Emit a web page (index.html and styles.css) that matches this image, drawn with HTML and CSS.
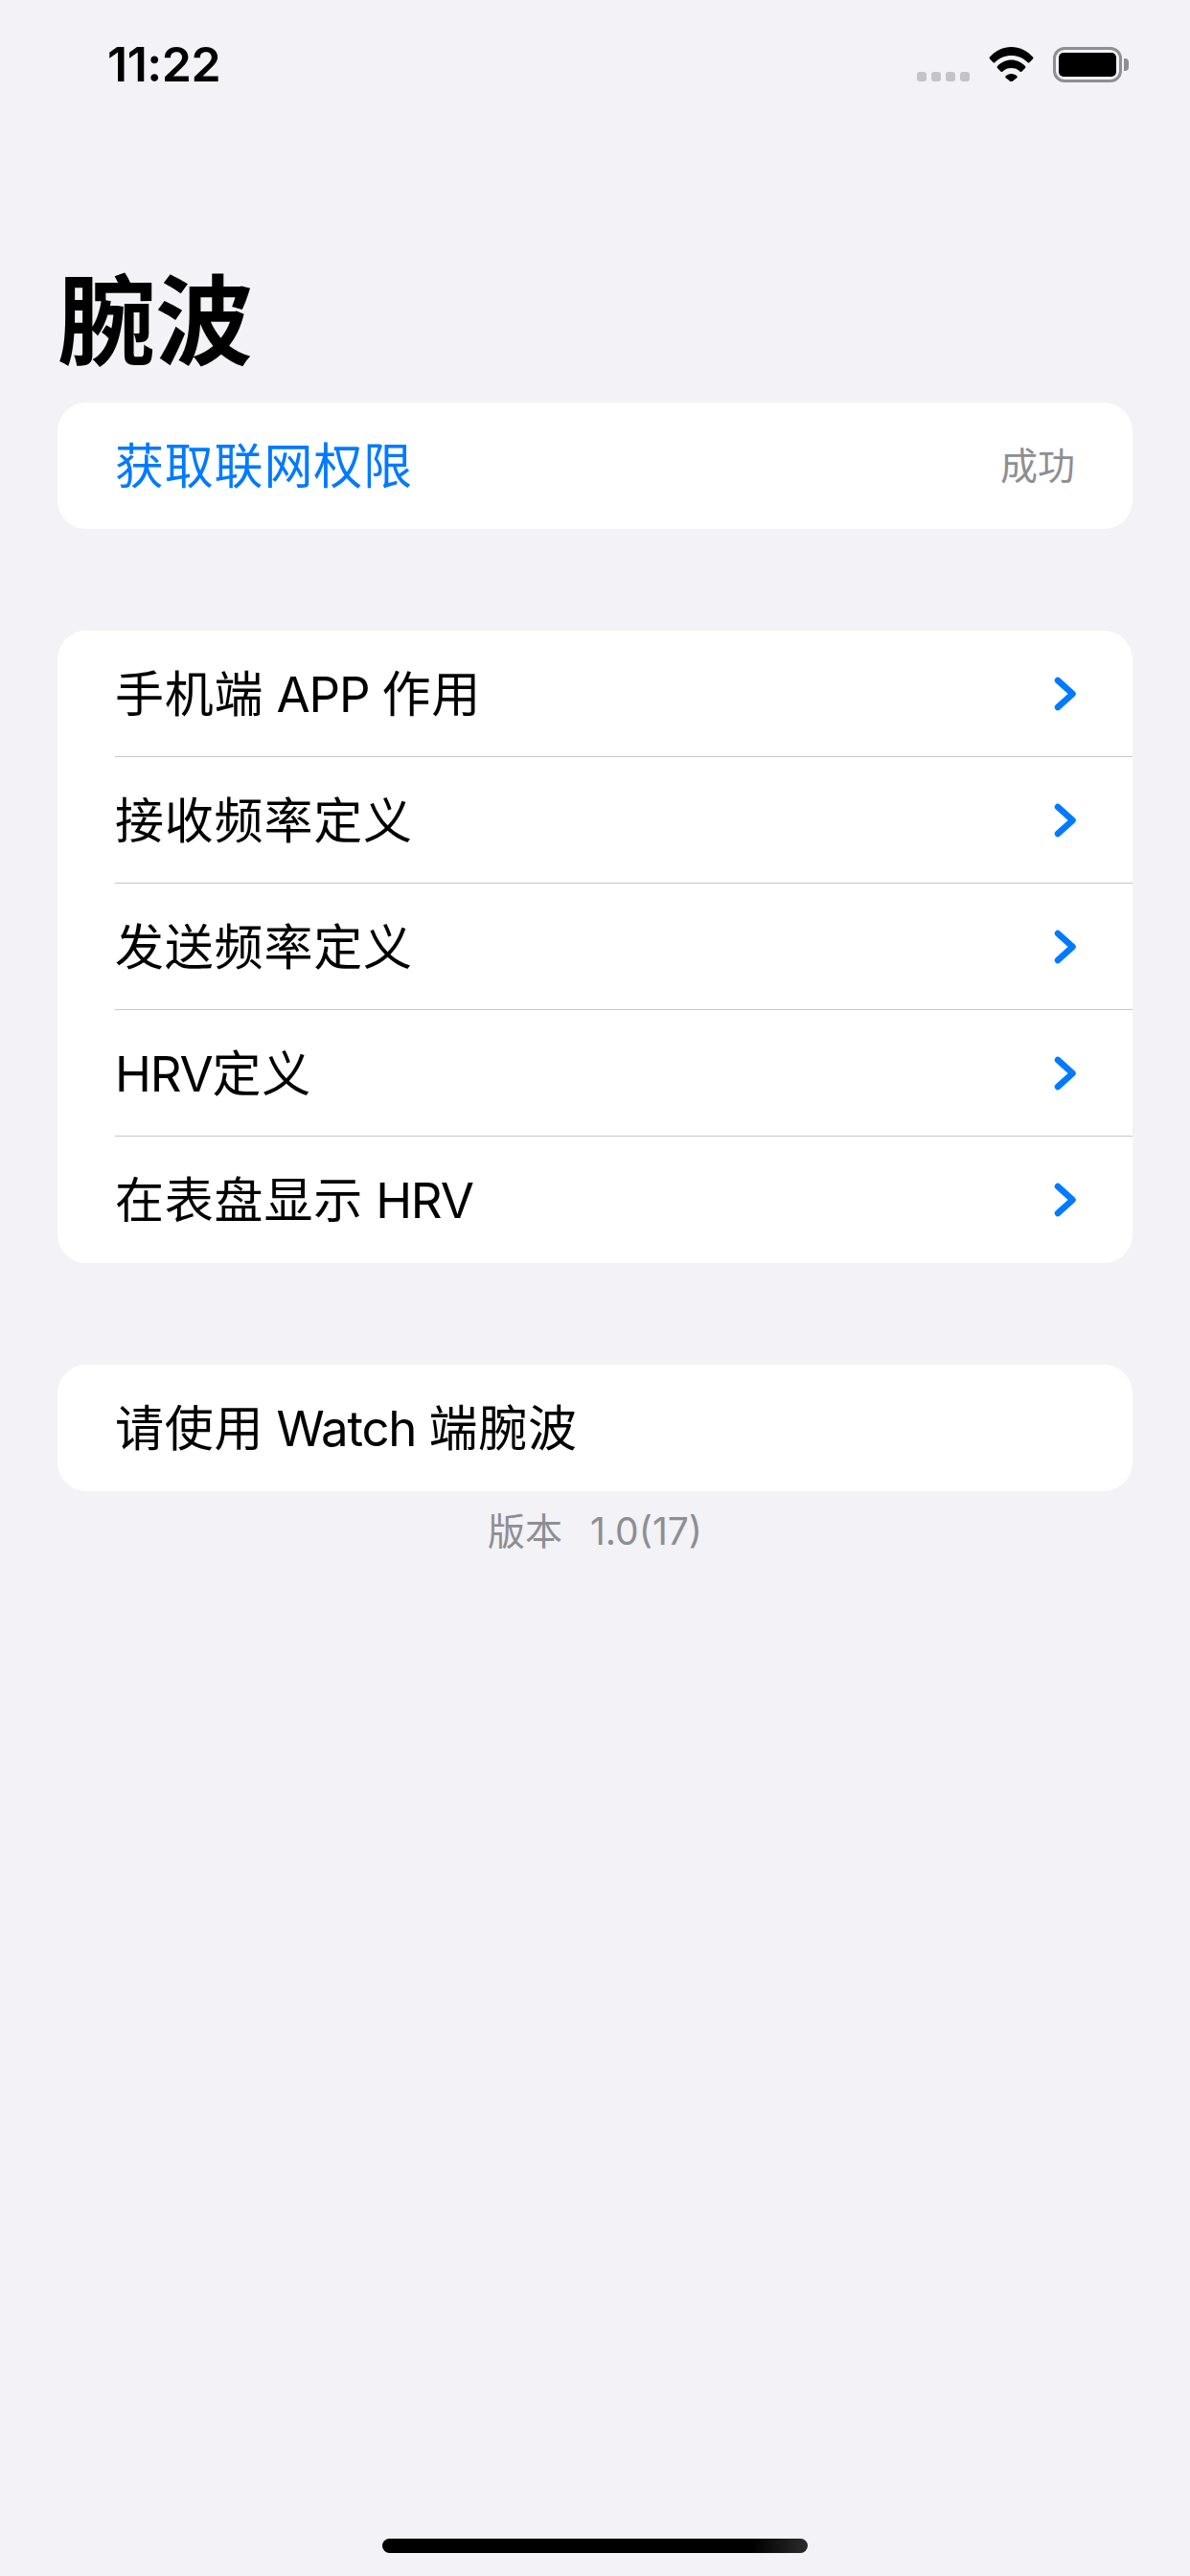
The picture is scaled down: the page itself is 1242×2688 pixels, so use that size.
FILE: index.html
```html
<!DOCTYPE html>
<html lang="zh-CN">
    <head>
        <meta charset="UTF-8">
        <meta name="viewport" content="width=device-width, initial-scale=1.0">
        <title>腕波</title>
        <link rel="stylesheet" href="styles.css">
</head>
<body>
    <div class="status-bar">
        <span class="time">11:22</span>
        <div class="status-icons">
            <div class="signal">
                <span></span><span></span><span></span><span></span>
            </div>
            <svg class="wifi" width="47" height="36" viewBox="0 0 47 36" fill="currentColor">
                <path d="M1 10.5C7 4 15 0 23.5 0C32 0 40 4 46 10.5Q47 11.5 46 12.5L42.5 16Q41.5 17 40.5 16C36 11.5 30 9 23.5 9C17 9 11 11.5 6.5 16Q5.5 17 4.5 16L1 12.5Q0 11.5 1 10.5Z"/>
                <path d="M9 20C13 16 18 13.5 23.5 13.5C29 13.5 34 16 38 20Q39 21 38 22L34.5 25.5Q33.5 26.5 32.5 25.5C30 23 27 22 23.5 22C20 22 17 23 14.5 25.5Q13.5 26.5 12.5 25.5L9 22Q8 21 9 20Z"/>
                <path d="M17.5 30.5C19 29 21 28 23.5 28C26 28 28 29 29.5 30.5Q30 31.2 29.5 32L24.5 36Q23.5 36.6 22.5 36L17.5 32Q17 31.2 17.5 30.5Z"/>
            </svg>
            <div class="battery">
                <div class="battery-body"><div class="battery-level"></div></div>
                <div class="battery-cap"></div>
            </div>
        </div>
    </div>

    <h1 class="title">腕波</h1>

    <div class="group">
        <div class="row">
            <span class="link">获取联网权限</span>
            <span class="value">成功</span>
        </div>
    </div>

    <div class="group">
        <div class="row">
            <span>手机端<span class="en"> APP </span>作用</span>
            <svg class="chevron" width="24" height="36" viewBox="0 0 24 36" fill="none" stroke="currentColor"><path d="M4 4L19.5 18L4 32"/></svg>
        </div>
        <div class="row">
            <span>接收频率定义</span>
            <svg class="chevron" width="24" height="36" viewBox="0 0 24 36" fill="none" stroke="currentColor"><path d="M4 4L19.5 18L4 32"/></svg>
        </div>
        <div class="row">
            <span>发送频率定义</span>
            <svg class="chevron" width="24" height="36" viewBox="0 0 24 36" fill="none" stroke="currentColor"><path d="M4 4L19.5 18L4 32"/></svg>
        </div>
        <div class="row">
            <span><span class="en">HRV</span>定义</span>
            <svg class="chevron" width="24" height="36" viewBox="0 0 24 36" fill="none" stroke="currentColor"><path d="M4 4L19.5 18L4 32"/></svg>
        </div>
        <div class="row">
            <span>在表盘显示<span class="en"> HRV</span></span>
            <svg class="chevron" width="24" height="36" viewBox="0 0 24 36" fill="none" stroke="currentColor"><path d="M4 4L19.5 18L4 32"/></svg>
        </div>
    </div>

    <div class="group group-last">
        <div class="row">
            <span>请使用<span class="en"> Watch </span>端腕波</span>
        </div>
    </div>

    <p class="version">版本<span class="version-number">1.0(17)</span></p>

    <div class="home-indicator"></div>
</body></html>
```

FILE: styles.css
```css
:root {
    --fg: #000;
    --bg: #f2f2f7;
    --blue: #007aff;
    --gray: #8e8e93;
    --line: #c6c6c8;
}

* {
    margin: 0;
    padding: 0;
    box-sizing: border-box;
    font-family: Inter, "Noto Sans CJK SC", sans-serif;
}

body {
    display: flex;
    flex-direction: column;
    min-height: 100vh;
    background-color: var(--bg);
    color: var(--fg);
}

.status-bar {
    display: flex;
    justify-content: space-between;
    align-items: flex-start;
    height: 285px;
    padding: 49px 64px 0 112px;
}

.time {
    font-size: 50px;
    line-height: 36px;
    font-weight: 600;
    letter-spacing: -0.5px;
}

.status-icons {
    display: flex;
    align-items: flex-start;
}

.signal {
    display: flex;
    gap: 5px;
    margin-top: 26px;
    margin-right: 20px;
}

.signal span {
    width: 10px;
    height: 10px;
    border-radius: 3px;
    background-color: #c4c4c8;
}

.wifi {
    margin-right: 20px;
}

.battery {
    display: flex;
    align-items: center;
    gap: 2px;
}

.battery-body {
    width: 72px;
    height: 37px;
    padding: 3px;
    border: 3px solid var(--gray);
    border-radius: 12px;
}

.battery-level {
    width: 100%;
    height: 100%;
    background-color: var(--fg);
    border-radius: 5px;
}

.battery-cap {
    width: 5px;
    height: 13px;
    background-color: var(--gray);
    border-radius: 0 4px 4px 0;
}

.title {
    font-size: 102px;
    line-height: 102px;
    font-weight: 700;
    margin-left: 60px;
    margin-bottom: 33px;
}

.group {
    margin: 0 60px 106px;
    background-color: #fff;
    border-radius: 30px;
    overflow: hidden;
}

.group-last {
    margin-bottom: 0;
}

.row {
    display: flex;
    justify-content: space-between;
    align-items: center;
    height: 132px;
    margin-left: 60px;
    padding-right: 60px;
    font-size: 51px;
    letter-spacing: 0.8px;
}

.row:not(:last-child) {
    border-bottom: 1px solid var(--line);
}

.row > span {
    margin-bottom: 6px;
}

.en {
    letter-spacing: -1.2px;
}

.link {
    color: var(--blue);
}

.value {
    font-size: 39px;
    letter-spacing: 0;
    color: var(--gray);
}

.chevron {
    margin-right: -2px;
    color: var(--blue);
    stroke-width: 6.5;
    stroke-linecap: round;
    stroke-linejoin: round;
}

.version {
    margin-top: 18px;
    text-align: center;
    font-size: 39px;
    line-height: 48px;
    color: var(--gray);
}

.version-number {
    margin-left: 29px;
}

.home-indicator {
    width: 444px;
    height: 15px;
    margin: auto auto 24px;
    border-radius: 8px;
    background: linear-gradient(to right, #000 87%, #2c2c2c 100%);
}
```
